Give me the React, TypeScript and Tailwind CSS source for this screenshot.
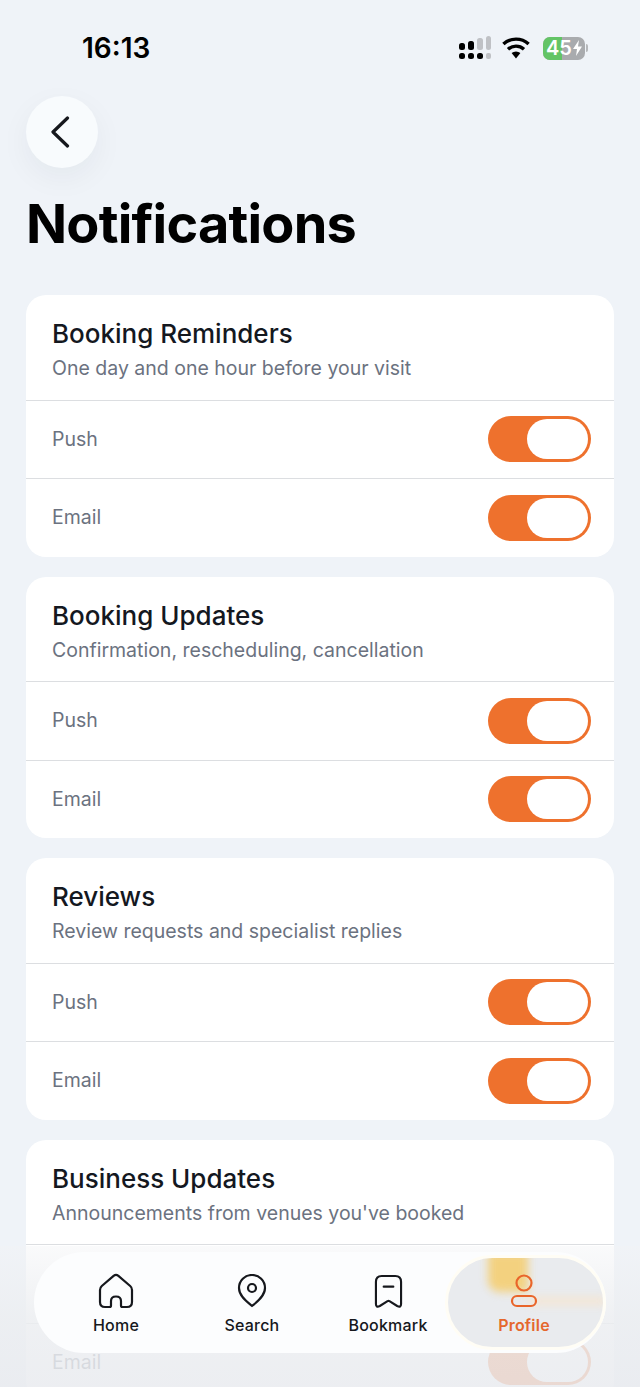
const sections = [
  { title: "Booking Reminders", subtitle: "One day and one hour before your visit" },
  { title: "Booking Updates", subtitle: "Confirmation, rescheduling, cancellation" },
  { title: "Reviews", subtitle: "Review requests and specialist replies" },
  { title: "Business Updates", subtitle: "Announcements from venues you've booked" },
];

function Toggle() {
  return (
    <div className="flex h-[46px] w-[103px] items-center justify-end rounded-full bg-[#ee712d] pr-[3px]">
      <div className="h-[40px] w-[61px] rounded-full bg-white" />
    </div>
  );
}

function Row({ label }: { label: string }) {
  return (
    <div className="flex h-[78.5px] items-center justify-between border-t border-[#dcdee1] pl-[26px] pr-[23px]">
      <span className="text-[19.5px] text-[#6b7280]">{label}</span>
      <Toggle />
    </div>
  );
}

function StatusBar() {
  return (
    <div className="flex h-[96px] shrink-0 items-start justify-between pl-[82px] pr-[52px] pt-[30px]">
      <span className="text-[28px] font-semibold leading-[36px] text-black">16:13</span>
      <div className="mt-[6px] flex items-center gap-[11px]">
        <svg width="32" height="24" viewBox="0 0 32 24" aria-hidden="true">
          <rect x="0" y="7" width="6" height="7" rx="2.5" fill="#000" />
          <rect x="9" y="5" width="6" height="9" rx="2.5" fill="#000" />
          <rect x="18" y="2" width="6" height="12" rx="2.5" fill="#bfc1c5" />
          <rect x="27" y="0" width="5" height="14" rx="2.5" fill="#bfc1c5" />
          <rect x="0" y="17" width="6" height="6" rx="2.5" fill="#000" />
          <rect x="9" y="17" width="6" height="6" rx="2.5" fill="#000" />
          <rect x="18" y="17" width="6" height="6" rx="2.5" fill="#000" />
          <rect x="27" y="17" width="5" height="6" rx="2" fill="#bfc1c5" />
        </svg>
        <svg width="28" height="22" viewBox="0 0 28 22" aria-hidden="true">
          <path d="M14 21.5 L9.6 16 A6.8 6.8 0 0 1 18.4 16 Z" fill="#000" />
          <path d="M6 12.2 A12 12 0 0 1 22 12.2" fill="none" stroke="#000" strokeWidth="3.4" />
          <path d="M1.4 7 A18.6 18.6 0 0 1 26.6 7" fill="none" stroke="#000" strokeWidth="3.4" />
        </svg>
        <div className="ml-[2px] flex items-center gap-[1px]">
          <div className="relative flex h-[23px] w-[42px] items-center overflow-hidden rounded-[7px] bg-[#a9abae]">
            <div className="absolute inset-y-0 left-0 w-[19px] bg-[#63c466]" />
            <span className="relative pl-[3px] text-[20px] font-semibold leading-none text-white">45</span>
            <svg className="relative" width="11" height="16" viewBox="0 0 11 16" aria-hidden="true">
              <path d="M7 0 L1 9 H5 L4 16 L10 6.5 H6 Z" fill="#fff" />
            </svg>
          </div>
          <div className="h-[8px] w-[2px] rounded-r-full bg-[#b5b7ba]" />
        </div>
      </div>
    </div>
  );
}

function NavItem({ label, active, children }: { label: string; active?: boolean; children: React.ReactNode }) {
  return (
    <div className="relative flex flex-col items-center">
      <div className="flex h-[36px] items-center justify-center">{children}</div>
      <span
        className={
          active
            ? "mt-[6px] text-[16px] font-semibold leading-[20px] tracking-[0.2px] text-[#e5672d]"
            : "mt-[6px] text-[16px] font-medium leading-[20px] tracking-[0.2px] text-[#16181d]"
        }
      >
        {label}
      </span>
    </div>
  );
}

function BottomNav() {
  return (
    <div className="absolute inset-x-0 bottom-0 h-[141px] bg-gradient-to-b from-[#f2f3f5]/40 via-[#eceef1]/85 to-[#e9ebef]/85">
      <div className="absolute left-[34px] top-[6px] grid h-[101px] w-[572px] grid-cols-[repeat(4,136px)] rounded-full bg-[#fcfdfe] pl-[14px] pt-[21px]">
        {/* active tab with the glass highlight */}
        <div className="absolute left-[411px] top-[3px] h-[95px] w-[161px] overflow-hidden rounded-full border-[3px] border-[#fffdf5] bg-[#e9ebee]">
          <div className="absolute left-[40px] top-[-6px] h-[40px] w-[40px] rounded-bl-[12px] bg-[#f3d17f] blur-[4px]" />
          <div className="absolute left-[78px] top-[39px] h-[8px] w-[80px] rounded-bl-[14px] bg-[#f5e6d3] blur-[4px]" />
        </div>
        <NavItem label="Home">
          <svg width="36" height="36" viewBox="0 0 36 36" fill="none" stroke="#16181d" strokeWidth="2.2" strokeLinejoin="round" aria-hidden="true">
            <path d="M15.6 2.9 L3.8 13 Q2 14.5 2 17 V29 Q2 34 7 34 H11.5 Q13 34 13 32.5 V28 Q13 23.5 18 23.5 Q23 23.5 23 28 V32.5 Q23 34 24.5 34 H29 Q34 34 34 29 V17 Q34 14.5 32.2 13 L20.4 2.9 Q18 1 15.6 2.9 Z" />
          </svg>
        </NavItem>
        <NavItem label="Search">
          <svg width="30" height="34" viewBox="0 0 30 34" fill="none" stroke="#16181d" strokeWidth="2.2" strokeLinejoin="round" aria-hidden="true">
            <path d="M15 32 C10 28 2 22 2 14 A13 13 0 0 1 28 14 C28 22 20 28 15 32 Z" />
            <circle cx="15" cy="14" r="4" />
          </svg>
        </NavItem>
        <NavItem label="Bookmark">
          <svg width="29" height="35" viewBox="0 0 30 36" fill="none" stroke="#16181d" strokeWidth="2.2" strokeLinecap="round" strokeLinejoin="round" aria-hidden="true">
            <path d="M2 8 Q2 2 8 2 H22 Q28 2 28 8 V31 Q28 35 24 33 L16 28 Q15 27.5 14 28 L6 33 Q2 35 2 31 Z" />
            <path d="M10 13 H20" />
          </svg>
        </NavItem>
        <NavItem label="Profile" active>
          <svg width="28" height="34" viewBox="0 0 28 34" fill="none" stroke="#e9652a" strokeWidth="2.2" aria-hidden="true">
            <circle cx="14" cy="9" r="7.5" />
            <rect x="2" y="22" width="24" height="10" rx="5" />
          </svg>
        </NavItem>
      </div>
    </div>
  );
}

export default function App() {
  return (
    <div
      className="relative h-[1387px] w-[640px] overflow-hidden bg-[#eff3f8]"
      style={{ fontFamily: "Inter, 'Noto Sans', sans-serif" }}
    >
      <StatusBar />
      <div className="px-[26px]">
        <button className="flex h-[72px] w-[72px] items-center justify-center rounded-full bg-[#f8fbfd] pr-[5px] shadow-[0_10px_30px_rgba(20,30,50,0.05)]">
          <svg width="20" height="32" viewBox="0 0 20 32" fill="none" stroke="#16181d" strokeWidth="3.2" strokeLinecap="round" strokeLinejoin="round" aria-hidden="true">
            <path d="M17.5 2 L3 16 L17.5 30" />
          </svg>
        </button>
        <h1 className="mt-[21px] text-[54px] font-bold leading-[70px] tracking-[-0.8px] text-black">Notifications</h1>
        <div className="mt-[36px] flex flex-col gap-[20px]">
          {sections.map((s) => (
            <div key={s.title} className="overflow-hidden rounded-[20px] bg-white">
              <div className="h-[104.5px] px-[26px] pt-[22px]">
                <div className="text-[26px] font-medium leading-[34px] text-[#14181f]">{s.title}</div>
                <div className="text-[19.5px] leading-[34px] text-[#6b7280]">{s.subtitle}</div>
              </div>
              <Row label="Push" />
              <Row label="Email" />
            </div>
          ))}
        </div>
      </div>
      <BottomNav />
    </div>
  );
}
